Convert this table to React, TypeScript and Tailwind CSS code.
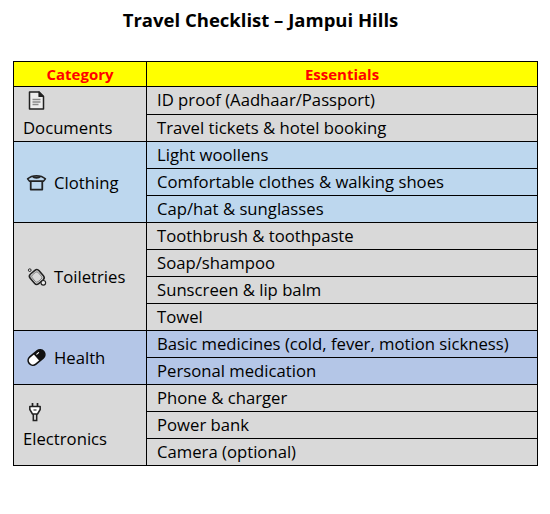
import React from 'react';

type Group = {
  name: string;
  icon: React.ReactNode;
  stacked: boolean;
  bg: string;
  items: string[];
};

function DocIcon() {
  return (
    <svg width="17" height="21" viewBox="0 0 17 20" fill="none" className="shrink-0">
      <path d="M1.5 1.5h9.5l4.5 4.5v12.5h-14z" stroke="#222" strokeWidth="1.5" strokeLinejoin="round" fill="#eee" />
      <path d="M11 1.5v4.5h4.5z" stroke="#222" strokeWidth="1.2" strokeLinejoin="round" fill="#222" />
      <path d="M4.5 9h8M4.5 11.5h8M4.5 14h6" stroke="#8a8a8a" strokeWidth="1.4" />
    </svg>
  );
}

function ShirtIcon() {
  return (
    <svg width="21" height="17" viewBox="0 0 20 16" fill="none" className="shrink-0">
      <path d="M1.5 4.5c2.2-2 4.5-3 8.5-3s6.3 1 8.5 3l-1.7 2.2h-13.6z" stroke="#222" strokeWidth="1.5" strokeLinejoin="round" />
      <path d="M6.5 2.3c1.2 1.7 5.8 1.7 7 0" stroke="#222" strokeWidth="1.8" fill="#222" />
      <path d="M4.5 6.7v8h11v-8" stroke="#222" strokeWidth="1.7" strokeLinejoin="round" />
    </svg>
  );
}

function SoapIcon() {
  return (
    <svg width="20" height="20" viewBox="0 0 19 19" fill="none" className="shrink-0">
      <rect x="3.8" y="3.5" width="11" height="12" rx="2.8" transform="rotate(-40 9.3 9.5)" stroke="#222" strokeWidth="1.5" />
      <rect x="5.5" y="5.3" width="7.6" height="8.4" rx="2" transform="rotate(-40 9.3 9.5)" stroke="#777" strokeWidth="0.8" />
      <circle cx="15.5" cy="15" r="2.2" stroke="#222" strokeWidth="1.1" fill="#eee" />
      <circle cx="2.6" cy="3" r="1.3" stroke="#222" strokeWidth="0.9" />
    </svg>
  );
}

function PillIcon() {
  return (
    <svg width="21" height="21" viewBox="0 0 20 20" fill="none" className="shrink-0">
      <g transform="rotate(-40 10 10)">
        <rect x="1" y="5.5" width="18" height="9" rx="4.5" stroke="#111" strokeWidth="1.6" fill="#fff" />
        <path d="M10 5.5h4.5a4.5 4.5 0 0 1 0 9H10z" fill="#111" />
        <path d="M12.3 7.7h2.2" stroke="#fff" strokeWidth="1.1" strokeLinecap="round" />
      </g>
    </svg>
  );
}

function PlugIcon() {
  return (
    <svg width="14" height="20" viewBox="0 0 14 20" fill="none" className="shrink-0">
      <path d="M4.5 1v3.5M9.5 1v3.5" stroke="#222" strokeWidth="1.7" />
      <path d="M1.8 4.5h10.4v3l-2.7 4.5h-5l-2.7-4.5z" stroke="#222" strokeWidth="1.5" strokeLinejoin="round" fill="#fff" />
      <path d="M5.5 8h3" stroke="#222" strokeWidth="1.1" />
      <path d="M5.3 12v6.5h3.4V12" stroke="#222" strokeWidth="1.5" />
    </svg>
  );
}

const groups: Group[] = [
  {
    name: 'Documents',
    icon: <DocIcon />,
    stacked: true,
    bg: 'bg-[#d9d9d9]',
    items: ['ID proof (Aadhaar/Passport)', 'Travel tickets & hotel booking'],
  },
  {
    name: 'Clothing',
    icon: <ShirtIcon />,
    stacked: false,
    bg: 'bg-[#bdd7ee]',
    items: ['Light woollens', 'Comfortable clothes & walking shoes', 'Cap/hat & sunglasses'],
  },
  {
    name: 'Toiletries',
    icon: <SoapIcon />,
    stacked: false,
    bg: 'bg-[#d9d9d9]',
    items: ['Toothbrush & toothpaste', 'Soap/shampoo', 'Sunscreen & lip balm', 'Towel'],
  },
  {
    name: 'Health',
    icon: <PillIcon />,
    stacked: false,
    bg: 'bg-[#b4c6e7]',
    items: ['Basic medicines (cold, fever, motion sickness)', 'Personal medication'],
  },
  {
    name: 'Electronics',
    icon: <PlugIcon />,
    stacked: true,
    bg: 'bg-[#d9d9d9]',
    items: ['Phone & charger', 'Power bank', 'Camera (optional)'],
  },
];

export default function App() {
  return (
    <div className="w-[550px] h-[514px] bg-white pt-[7px] font-['Open_Sans',Arial,sans-serif] text-black">
      <h1 className="text-center pr-[29px] text-[18.5px] font-bold leading-[26px]">Travel Checklist – Jampui Hills</h1>

      <table className="ml-[13px] mt-[28px] w-[525px] border-collapse table-fixed text-[16.7px]">
        <colgroup>
          <col className="w-[133px]" />
          <col />
        </colgroup>
        <thead>
          <tr className="bg-[#ffff00] text-[#ff0000] font-bold h-[25px] text-[15px]">
            <th className="border border-black p-0 leading-[24px]">Category</th>
            <th className="border border-black p-0 leading-[24px]">Essentials</th>
          </tr>
        </thead>
        <tbody>
          {groups.map((g) =>
            g.items.map((item, i) => (
              <tr key={item} className={`${g.bg} h-[27px]`}>
                {i === 0 && (
                  <td rowSpan={g.items.length} className="border border-black pl-[9px] pr-0 py-0 align-middle">
                    {g.stacked ? (
                      <div className="flex flex-col items-start">
                        <div className="h-[27px] flex items-center pl-[5px]">{g.icon}</div>
                        <div className="leading-[27px]">{g.name}</div>
                      </div>
                    ) : (
                      <div className="flex items-center">
                        <div className="w-[21px] ml-[3px] mr-[7px] flex justify-center">{g.icon}</div>
                        <span className="leading-[27px]">{g.name}</span>
                      </div>
                    )}
                  </td>
                )}
                <td className="border border-black px-[10px] py-0 leading-[26px] whitespace-nowrap">{item}</td>
              </tr>
            ))
          )}
        </tbody>
      </table>
    </div>
  );
}
